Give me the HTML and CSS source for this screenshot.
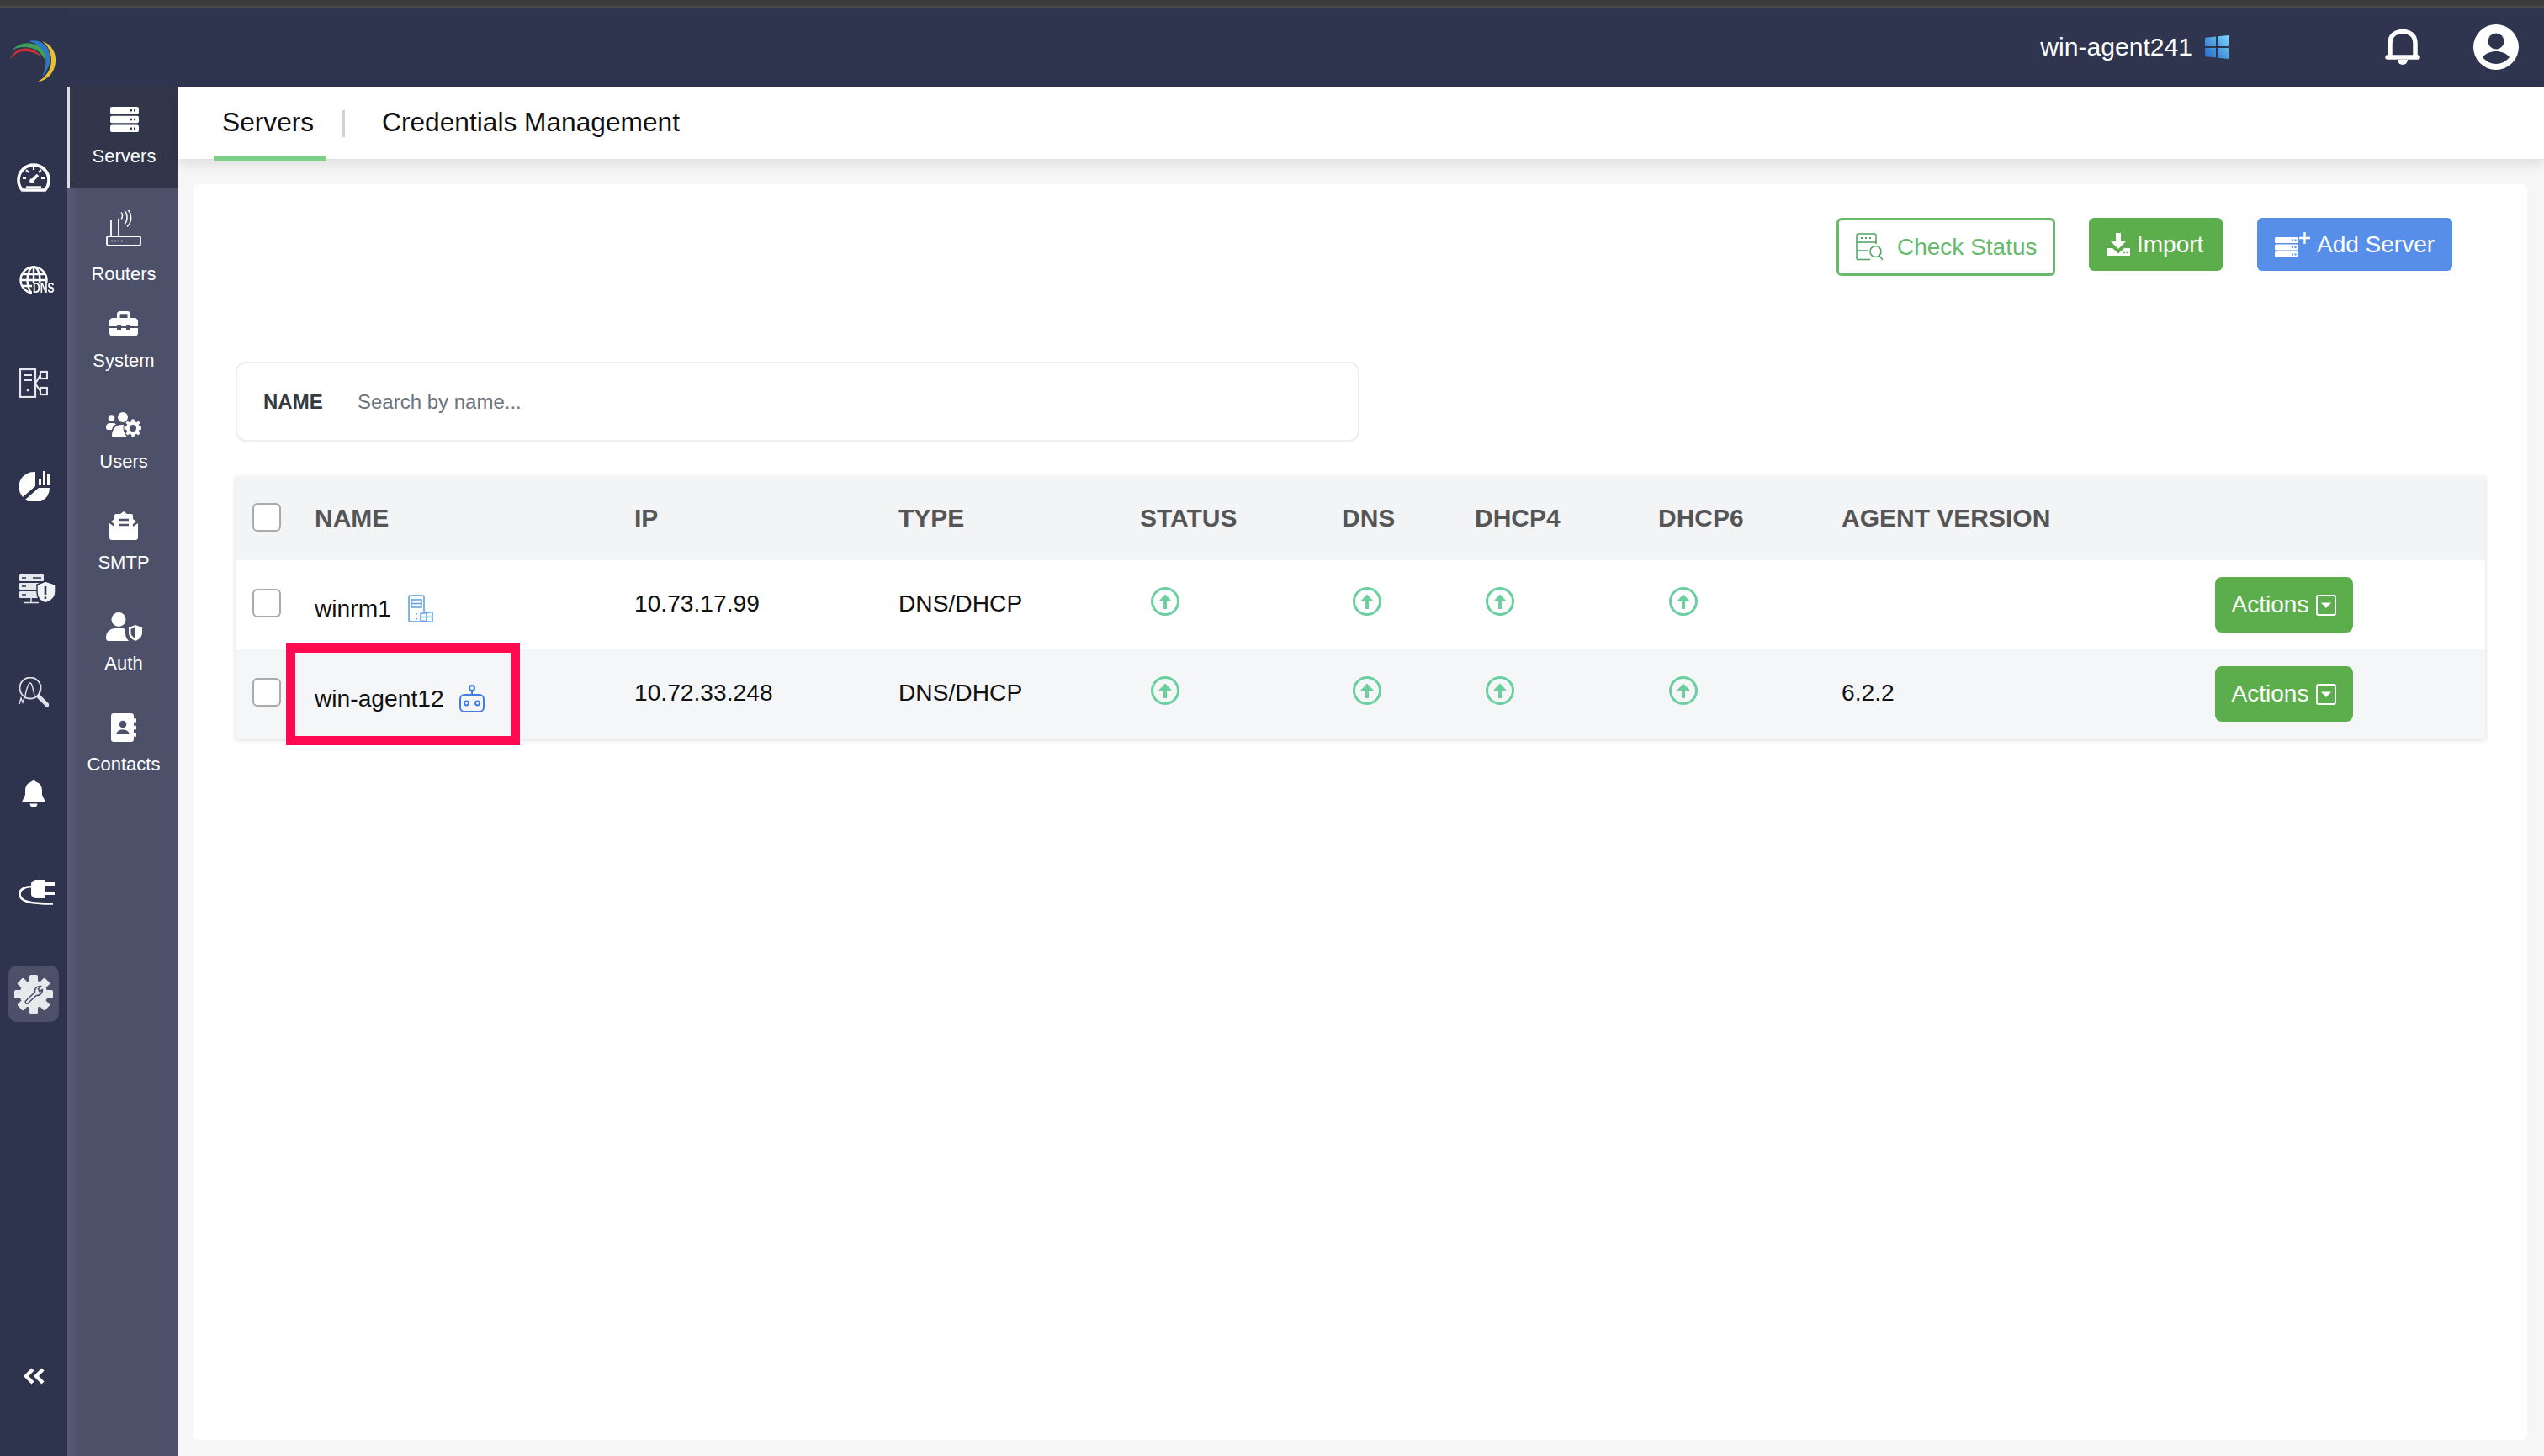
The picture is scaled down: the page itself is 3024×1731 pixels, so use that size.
FILE: index.html
```html
<!DOCTYPE html>
<html lang="en">
<head>
  <meta charset="UTF-8">
  <meta name="viewport" content="width=device-width, initial-scale=1.0">
  <title>Servers</title>
  <link rel="stylesheet" href="styles.css">
</head>
<body>
  <div class="window-strip"></div>
  <div class="app">

    <!-- Left icon rail -->
    <aside class="rail">
      <div class="rail-logo">
        <svg width="56" height="52" viewBox="0 0 56 52">
          <path d="M38 2 C50 6 55 16 54 27 C53 39 45 48 32 51 C42 45 49 36 49 25 C49 15 45 7 38 2Z" fill="#e8c22e"/>
          <path d="M22 2 C33 -1 45 5 47 17 C49 28 44 38 38 44 C42 35 44 27 41 18 C37 9 30 4 22 2Z" fill="#2f78c4"/>
          <path d="M2 13 C10 4 22 2 32 7 C40 11 43 18 42 26 C39 18 33 12 25 10 C16 8 8 9 2 13Z" fill="#3f9e57"/>
          <path d="M0 24 C3 13 14 9 24 11 C31 13 35 17 37 21 C31 16 24 14 17 14 C10 14 4 18 0 24Z" fill="#c9303a"/>
        </svg>
      </div>

      <div class="rail-item">
        <svg width="40" height="35" viewBox="0 0 40 35" fill="none" stroke="#fff">
          <path d="M6.5 33 A18 18 0 1 1 33.500 33 Z" stroke-width="3.600" stroke-linejoin="round"/>
          <path d="M20 5v4M7 19h4M29 19h4M11 9l3 3M29 9l-3 3" stroke-width="2.200"/>
          <path d="M18 22l7-7" stroke-width="3.500"/>
          <circle cx="18" cy="22" r="2.800" fill="#fff" stroke="none"/>
          <path d="M11 29.500h18" stroke-width="2.400"/>
        </svg>
      </div>
      <div class="rail-item">
        <div class="dns-icon">
          <svg width="40" height="34" viewBox="0 0 40 34" fill="none" stroke="#fff" stroke-width="2.400">
            <circle cx="17" cy="17" r="15.500"/>
            <ellipse cx="17" cy="17" rx="7.500" ry="15.500"/>
            <path d="M17 2v30M3 10h28M1.500 17h31M3 24h28"/>
            <rect x="15" y="20" width="25" height="14" fill="#2e334e" stroke="none"/>
          </svg>
          <span class="dns-text">DNS</span>
        </div>
      </div>
      <div class="rail-item">
        <svg width="34" height="35" viewBox="0 0 34 35" fill="none" stroke="#e6e7ec" stroke-width="2.200">
          <rect x="1" y="1" width="18" height="33"/>
          <path d="M5 8h10M5 14h10"/>
          <circle cx="10" cy="26" r="1.400" fill="#e6e7ec" stroke="none"/>
          <rect x="25" y="4" width="8" height="8"/>
          <rect x="25" y="23" width="8" height="8"/>
          <path d="M19 18l6-10M19 18l6 9"/>
        </svg>
      </div>
      <div class="rail-item">
        <svg width="37" height="37" viewBox="0 0 37 37" fill="#fff">
          <path d="M20 2 A18 18 0 0 0 5 32 L20 19 Z"/>
          <path d="M37 21 A18 18 0 0 1 8 35 L24 21 Z"/>
          <rect x="24" y="10" width="3" height="8"/>
          <rect x="29" y="1" width="3" height="17"/>
          <rect x="34" y="5" width="3" height="13"/>
        </svg>
      </div>
      <div class="rail-item rail-wide">
        <svg width="43" height="35" viewBox="0 0 43 35">
          <rect x="0" y="0" width="29" height="8" rx="1" fill="#e6e7ec"/>
          <rect x="0" y="10" width="29" height="8" rx="1" fill="#e6e7ec"/>
          <rect x="0" y="20" width="29" height="8" rx="1" fill="#e6e7ec"/>
          <path d="M3 4h5M3 14h5M3 24h5M16 4h10" stroke="#2e334e" stroke-width="1.600"/>
          <path d="M14 28v5M5 33.500h18" stroke="#e6e7ec" stroke-width="1.500"/>
          <path d="M31 8 L43 12 V21 C43 28 37 32 31 34 C25 32 21 28 21 21 V12 Z" fill="#f2f3f5" stroke="#2e334e" stroke-width="1.500"/>
          <path d="M31 14v10M31 26.500v2.500" stroke="#2e334e" stroke-width="2.600"/>
        </svg>
      </div>
      <div class="rail-item">
        <svg width="36" height="36" viewBox="0 0 36 36" fill="none" stroke="#dfe1e8">
          <circle cx="14" cy="13" r="12.500" stroke-width="1.800"/>
          <path d="M1 32l2-7 2 5 3-8M8 22c2-10 4-15 6-15s3 6 5 15M27 9l-3 12" stroke-width="1.400"/>
          <path d="M24 23l10 10" stroke-width="5" stroke-linecap="round"/>
        </svg>
      </div>
      <div class="rail-item rail-bell">
        <svg width="28" height="33" viewBox="0 0 28 33" fill="#fff">
          <path d="M14 0c-1.600 0-2.600 1-2.700 2.600C6.600 4 4 8 4 13v5L0 26.500h28L24 18v-5c0-5-2.600-9-7.300-10.400C16.600 1 15.600 0 14 0z"/>
          <path d="M9.500 28.500h9A4.500 4.500 0 0 1 14 33a4.500 4.500 0 0 1-4.500-4.500z"/>
        </svg>
      </div>
      <div class="rail-item rail-plug rail-wide">
        <svg width="44" height="31" viewBox="0 0 44 31">
          <path d="M17 8C8 8 1.500 11 1.500 17c0 8 9 11.500 39.500 11.500" fill="none" stroke="#fff" stroke-width="2.600"/>
          <path d="M22 0h9v22h-9c-4 0-7-2-7-5V5c0-3 3-5 7-5z" fill="#fff"/>
          <rect x="32" y="3" width="11" height="4" fill="#fff"/>
          <rect x="32" y="14" width="11" height="4" fill="#fff"/>
        </svg>
      </div>
      <div class="rail-settings">
        <svg width="46" height="46" viewBox="0 0 46 46" fill="#e8e9ec">
          <circle cx="23" cy="23" r="16.500"/>
          <rect x="18" y="0" width="10" height="46" rx="1.500"/>
          <rect x="18" y="0" width="10" height="46" rx="1.500" transform="rotate(45 23 23)"/>
          <rect x="18" y="0" width="10" height="46" rx="1.500" transform="rotate(90 23 23)"/>
          <rect x="18" y="0" width="10" height="46" rx="1.500" transform="rotate(135 23 23)"/>
          <path d="M13.500 31 L24.500 20.500 C24 16 27 13 32 13.500 L28.500 17 L30 20 L33.500 17.500 C33.500 22 30 25 26 24.500 L16 34 C14 35 12.500 33 13.500 31Z" fill="none" stroke="#4c5069" stroke-width="1.600" stroke-linejoin="round"/>
        </svg>
      </div>
      <div class="rail-collapse">
        <svg width="25" height="20" viewBox="0 0 25 20" fill="none" stroke="#fff" stroke-width="4.500" stroke-linejoin="round">
          <path d="M11 2L3 10l8 8M23 2l-8 8 8 8"/>
        </svg>
      </div>
    </aside>

    <div class="main">
      <!-- Top bar -->
      <header class="topbar">
        <span class="agent-name">win-agent241</span>
        <svg class="win-logo" width="28" height="28" viewBox="0 0 28 28">
          <defs>
            <linearGradient id="winBlue" x1="0" y1="1" x2="1" y2="0">
              <stop offset="0" stop-color="#2364c4"/>
              <stop offset="1" stop-color="#78d6fb"/>
            </linearGradient>
          </defs>
          <path d="M0 3l13-1.500V13H0zM15 1.300L28 0v13H15zM0 15h13v11.500L0 25zM15 15h13v13l-13-1.300z" fill="url(#winBlue)"/>
        </svg>
        <svg class="top-bell" width="42" height="42" viewBox="0 0 42 42" fill="none" stroke="#fff">
          <path d="M6 31V17C6 7 12 2.500 21 2.500S36 7 36 17v14" stroke-width="5.500"/>
          <path d="M3 33h36" stroke-width="5.500" stroke-linecap="round"/>
          <path d="M15 36h12a6 6 0 0 1-12 0z" fill="#fff" stroke="none"/>
        </svg>
        <svg class="top-user" width="54" height="54" viewBox="0 0 54 54">
          <circle cx="27" cy="27" r="27" fill="#fff"/>
          <circle cx="27" cy="20" r="9.500" fill="#2e334e"/>
          <path d="M11 39c4-5 10-7 16-7s12 2 16 7c-4 5-10 8-16 8s-12-3-16-8z" fill="#2e334e"/>
        </svg>
      </header>

      <div class="body">
        <!-- Second level menu -->
        <nav class="subnav">
          <a class="sub-item active">
            <span class="sub-icon">
              <svg width="34" height="30" viewBox="0 0 34 30">
                <rect y="0" width="34" height="8.500" rx="2" fill="#fff"/>
                <rect y="10.800" width="34" height="8.500" rx="2" fill="#fff"/>
                <rect y="21.500" width="34" height="8.500" rx="2" fill="#fff"/>
                <path d="M24 4.200h2M28 4.200h2M24 15h2M28 15h2M24 25.800h2M28 25.800h2" stroke="#32364a" stroke-width="2.400"/>
              </svg>
            </span>
            <span class="sub-label">Servers</span>
          </a>
          <a class="sub-item sub-item-tall">
            <span class="sub-icon">
              <svg width="42" height="43" viewBox="0 0 42 43" fill="none" stroke="#fff">
                <rect x="1" y="31" width="40" height="11" rx="2" stroke-width="1.800"/>
                <path d="M6 12v19M15 10v21" stroke-width="1.800"/>
                <path d="M18 3c2 2 2 6 0 8M22 1c4 4 4 12 0 16M26 0c5 5 5 15-1 20" stroke-width="1.500" transform="translate(0 -.5)"/>
                <path d="M6 36.500h14" stroke-width="1.600" stroke-dasharray="2 2"/>
              </svg>
            </span>
            <span class="sub-label">Routers</span>
          </a>
          <a class="sub-item">
            <span class="sub-icon">
              <svg width="34" height="30" viewBox="0 0 34 30" fill="#fff">
                <path d="M9 9V3.500C9 1.500 10.500 0 12.500 0h9C23.500 0 25 1.500 25 3.500V9h-3.500V4a.8.8 0 0 0-.8-.8h-7.400a.8.8 0 0 0-.8.800v5z"/>
                <path d="M4 8h26c2.200 0 4 1.800 4 4v6H25v-2h-5v2h-6v-2H9v2H0v-6c0-2.200 1.800-4 4-4z"/>
                <path d="M0 20h9v2h5v-2h6v2h5v-2h9v6c0 2.200-1.800 4-4 4H4c-2.200 0-4-1.800-4-4z"/>
              </svg>
            </span>
            <span class="sub-label">System</span>
          </a>
          <a class="sub-item">
            <span class="sub-icon">
              <svg width="42" height="30" viewBox="0 0 42 30" fill="#fff">
                <circle cx="6.500" cy="7" r="3.800"/>
                <circle cx="20" cy="6" r="6"/>
                <path d="M0 18c0-3 2-5 5-5h3c2 0 3 .5 4 1.500-3 1.500-4.500 3.500-5 6.500H2c-1 0-2-1-2-3z"/>
                <path d="M9 30c-1 0-2-1-2-2 0-8 5-13 12-13 3 0 5 .6 6.500 2-3 3-3.500 6-2.500 9l2 4z"/>
                <circle cx="32" cy="19" r="11.500" fill="#4c5069"/>
                <circle cx="32" cy="19" r="6" fill="none" stroke="#fff" stroke-width="4"/>
                <path d="M32 8.500v21M21.500 19h21M24.500 11.500l15 15M39.500 11.500l-15 15" stroke="#fff" stroke-width="3.400" stroke-dasharray="3.400 14.200"/>
              </svg>
            </span>
            <span class="sub-label">Users</span>
          </a>
          <a class="sub-item">
            <span class="sub-icon">
              <svg width="34" height="34" viewBox="0 0 34 34" fill="#fff">
                <path d="M17 0l4 3h5a2 2 0 0 1 2 2v4l4 3-4 3v5l-11 7-11-7v-5l-4-3 4-3V5a2 2 0 0 1 2-2h5z"/>
                <path d="M0 14l16 11c.6.400 1.400.400 2 0L34 14v17c0 1.700-1.300 3-3 3H3c-1.700 0-3-1.300-3-3z"/>
                <path d="M11 10h12M11 16h12" stroke="#4c5069" stroke-width="2.600"/>
              </svg>
            </span>
            <span class="sub-label">SMTP</span>
          </a>
          <a class="sub-item">
            <span class="sub-icon">
              <svg width="43" height="34" viewBox="0 0 43 34" fill="#fff">
                <circle cx="15" cy="8.500" r="8.500"/>
                <path d="M0 30c0-7 5-11 11-11h7c2 0 3.500.3 5 1v5c0 3.500 1.500 6.500 4 9H3c-2 0-3-1.500-3-4z"/>
                <path d="M35 15l8 3v6c0 5-3.500 8-8 10-4.500-2-8-5-8-10v-6z"/>
                <path d="M35 18v13c-3-1.500-5.500-3.500-5.500-7v-4.200z" fill="#4c5069"/>
              </svg>
            </span>
            <span class="sub-label">Auth</span>
          </a>
          <a class="sub-item">
            <span class="sub-icon">
              <svg width="30" height="34" viewBox="0 0 30 34" fill="#fff">
                <path d="M3 0h21c1.700 0 3 1.300 3 3v28c0 1.700-1.300 3-3 3H3c-1.700 0-3-1.300-3-3V3c0-1.700 1.300-3 3-3z"/>
                <rect x="27" y="6" width="3" height="5" rx="1.200"/>
                <rect x="27" y="14.500" width="3" height="5" rx="1.200"/>
                <rect x="27" y="23" width="3" height="5" rx="1.200"/>
                <circle cx="14" cy="13" r="4.300" fill="#4c5069"/>
                <path d="M6.500 25c0-3.500 3-5.500 7.500-5.500s7.500 2 7.500 5.500z" fill="#4c5069"/>
              </svg>
            </span>
            <span class="sub-label">Contacts</span>
          </a>
        </nav>

        <div class="content">
          <div class="tabs">
            <a class="tab active">Servers</a>
            <span class="tab-sep"></span>
            <a class="tab">Credentials Management</a>
          </div>

          <div class="page">
            <section class="card">
              <div class="toolbar">
                <button class="btn btn-outline">
                  <svg width="32" height="33" viewBox="0 0 32 33" fill="none" stroke="#4ea25e" stroke-width="1.500">
                    <path d="M1 31V3c0-1.200.8-2 2-2h19c1.200 0 2 .8 2 2v10M1 11h23M1 21h14M1 31.500h16"/>
                    <path d="M6 6h2M11 6h2M16 6h2" stroke-width="2"/>
                    <circle cx="23.500" cy="22" r="6.500"/>
                    <path d="M28 27l4 5"/>
                  </svg>
                  <span>Check Status</span>
                </button>
                <button class="btn btn-green">
                  <svg width="28" height="27" viewBox="0 0 28 27" fill="#fff">
                    <path d="M11 0h6v10h6l-9 9-9-9h6z"/>
                    <path d="M1 18h6l7 6.500L21 18h6c.6 0 1 .4 1 1v7c0 .6-.4 1-1 1H1c-.6 0-1-.4-1-1v-7c0-.6.4-1 1-1z"/>
                    <path d="M20 23.500h2M23.500 23.500h2" stroke="#5cae4c" stroke-width="1.600"/>
                  </svg>
                  <span>Import</span>
                </button>
                <button class="btn btn-blue">
                  <svg width="42" height="30" viewBox="0 0 42 30" fill="#fff">
                    <rect y="6" width="28" height="7" rx="1.500"/>
                    <rect y="14.500" width="28" height="7" rx="1.500"/>
                    <rect y="23" width="28" height="7" rx="1.500"/>
                    <path d="M20 9.500h2M23.500 9.500h2M20 18h2M23.500 18h2M20 26.500h2M23.500 26.500h2" stroke="#568eea" stroke-width="1.800"/>
                    <path d="M35.500 0v14M29 7h13" stroke="#fff" stroke-width="2.400"/>
                  </svg>
                  <span>Add Server</span>
                </button>
              </div>

              <div class="search-box">
                <label class="search-label" for="nameSearch">NAME</label>
                <input class="search-input" id="nameSearch" type="text" placeholder="Search by name...">
              </div>

              <div class="table-wrap">
                <table class="servers">
                  <colgroup>
                    <col class="c-check"><col class="c-name"><col class="c-ip"><col class="c-type"><col class="c-status"><col class="c-dns"><col class="c-dhcp"><col class="c-dhcp"><col class="c-agent"><col class="c-actions">
                  </colgroup>
                  <thead>
                    <tr>
                      <th><span class="check"></span></th>
                      <th>NAME</th>
                      <th>IP</th>
                      <th>TYPE</th>
                      <th>STATUS</th>
                      <th>DNS</th>
                      <th>DHCP4</th>
                      <th>DHCP6</th>
                      <th>AGENT VERSION</th>
                      <th></th>
                    </tr>
                  </thead>
                  <tbody>
                    <tr>
                      <td><span class="check"></span></td>
                      <td>
                        <div class="name-cell">
                          <span>winrm1</span>
                          <svg width="30" height="33" viewBox="0 0 30 33" fill="none" stroke="#5b9de8" stroke-width="1.500">
                            <path d="M16 32H3c-1.200 0-2-.8-2-2V3c0-1.200.8-2 2-2h14c1.200 0 2 .8 2 2v17"/>
                            <rect x="4" y="6" width="12" height="9"/>
                            <path d="M4 10.500h12"/>
                            <path d="M10 22v1.500M10 28v1.500" stroke-width="2"/>
                            <path d="M15 22.500l14-2v12l-14-1.500zM22 21.500v10.500M15 26.500h14"/>
                          </svg>
                        </div>
                      </td>
                      <td class="val">10.73.17.99</td>
                      <td class="val">DNS/DHCP</td>
                      <td class="state"><svg class="up"><use href="#statusUp"/></svg></td>
                      <td class="state"><svg class="up"><use href="#statusUp"/></svg></td>
                      <td class="state"><svg class="up"><use href="#statusUp"/></svg></td>
                      <td class="state"><svg class="up"><use href="#statusUp"/></svg></td>
                      <td class="val"></td>
                      <td>
                        <button class="btn-actions">Actions
                          <svg width="24" height="25" viewBox="0 0 24 25"><rect x="1" y="1" width="22" height="23" rx="2" fill="none" stroke="#fff" stroke-width="2"/><path d="M6 9.500h12l-6 6.500z" fill="#fff"/></svg>
                        </button>
                      </td>
                    </tr>
                    <tr class="alt">
                      <td><span class="check"></span></td>
                      <td>
                        <div class="name-cell">
                          <span>win-agent12</span>
                          <svg width="30" height="33" viewBox="0 0 30 33" fill="none" stroke="#3f7fe0" stroke-width="2">
                            <circle cx="15" cy="4" r="3"/>
                            <path d="M15 7v5"/>
                            <rect x="1" y="12" width="28" height="20" rx="5"/>
                            <circle cx="8.500" cy="22" r="2.400"/>
                            <circle cx="21.500" cy="22" r="2.400"/>
                          </svg>
                        </div>
                      </td>
                      <td class="val">10.72.33.248</td>
                      <td class="val">DNS/DHCP</td>
                      <td class="state"><svg class="up"><use href="#statusUp"/></svg></td>
                      <td class="state"><svg class="up"><use href="#statusUp"/></svg></td>
                      <td class="state"><svg class="up"><use href="#statusUp"/></svg></td>
                      <td class="state"><svg class="up"><use href="#statusUp"/></svg></td>
                      <td class="val">6.2.2</td>
                      <td>
                        <button class="btn-actions">Actions
                          <svg width="24" height="25" viewBox="0 0 24 25"><rect x="1" y="1" width="22" height="23" rx="2" fill="none" stroke="#fff" stroke-width="2"/><path d="M6 9.500h12l-6 6.500z" fill="#fff"/></svg>
                        </button>
                      </td>
                    </tr>
                  </tbody>
                </table>
                <!-- Highlight drawn over the screenshot -->
                <div class="highlight"></div>
              </div>
            </section>
          </div>
        </div>
      </div>
    </div>
  </div>

  <svg class="sprites" width="0" height="0">
    <symbol id="statusUp" viewBox="0 0 34 34">
      <circle cx="17" cy="17" r="15.500" fill="none" stroke="#6bcf9f" stroke-width="3"/>
      <path d="M17 8.500L25 17h-6v9h-4v-9H9z" fill="#6bcf9f"/>
    </symbol>
  </svg>
</body>
</html>
```

FILE: styles.css
```css
/* Base */
* {
  box-sizing: border-box;
}

html, body {
  margin: 0;
  height: 1731px;
  overflow: hidden;
}

body {
  font-family: "Liberation Sans", Arial, sans-serif;
  background-color: #f6f6f6;
  color: #111;
}

svg {
  display: block;
  flex: none;
}

.sprites {
  position: absolute;
}

.window-strip {
  height: 9px;
  background-color: #3b3b3b;
  border-bottom: 2px solid #4a4a48;
}

.app {
  display: flex;
  height: 1722px;
}

/* Left rail */
.rail {
  width: 80px;
  flex: none;
  display: flex;
  flex-direction: column;
  align-items: center;
  background-color: #2e334e;
}

.rail-logo {
  width: 100%;
  height: 139.75px;
  padding: 38px 0 0 12px;
}

.rail-logo svg {
  filter: blur(0.6px);
}

.rail-item {
  height: 122.5px;
  display: flex;
  align-items: center;
  justify-content: center;
}

.rail-wide {
  padding-left: 8px;
}

.rail-bell {
  padding-bottom: 4px;
}

.rail-plug {
  height: 110px;
}

.dns-icon {
  position: relative;
  margin-left: 6px;
}

.dns-text {
  position: absolute;
  left: 16px;
  bottom: -2px;
  font-size: 16px;
  line-height: 18px;
  font-weight: bold;
  color: #fff;
  transform: scaleX(0.76);
  transform-origin: left center;
}

.rail-settings {
  width: 60px;
  height: 67px;
  margin-top: 32px;
  border-radius: 10px;
  background-color: #4c5069;
  display: flex;
  align-items: center;
  justify-content: center;
}

.rail-collapse {
  margin-top: auto;
  padding-bottom: 85px;
}

/* Top bar */
.main {
  flex: 1;
  min-width: 0;
  display: flex;
  flex-direction: column;
}

.topbar {
  height: 94px;
  flex: none;
  display: flex;
  align-items: center;
  justify-content: flex-end;
  padding-right: 30px;
  background-color: #2f344f;
  color: #fff;
}

.agent-name {
  font-size: 30.1px;
}

.win-logo {
  margin-left: 15px;
}

.top-bell {
  margin-left: 186px;
}

.top-user {
  margin-left: 63px;
}

.body {
  flex: 1;
  min-height: 0;
  display: flex;
}

/* Second level menu */
.subnav {
  width: 132px;
  flex: none;
  background: linear-gradient(90deg, #585c73, #4c5069 14px);
}

.sub-item {
  height: 120px;
  padding: 22px 0 0 2px;
  display: flex;
  flex-direction: column;
  align-items: center;
  color: #fff;
}

.sub-item.active {
  padding-left: 0;
  background: #32364a;
  border-left: 3px solid #dcdde2;
}

.sub-item-tall {
  height: 123px;
  padding-top: 27px;
}

.sub-icon {
  height: 34px;
  display: flex;
  align-items: center;
  justify-content: center;
}

.sub-item-tall .sub-icon {
  height: 43px;
  margin-bottom: 6px;
}

.sub-label {
  margin-top: 14px;
  font-size: 22px;
  line-height: 26px;
}

/* Tabs */
.content {
  flex: 1;
  min-width: 0;
  display: flex;
  flex-direction: column;
}

.tabs {
  height: 86px;
  flex: none;
  display: flex;
  align-items: flex-start;
  padding-left: 42px;
  background-color: #fff;
  box-shadow: 0 6px 14px rgba(0, 0, 0, 0.1);
  position: relative;
}

.tab {
  font-size: 31.7px;
  line-height: 84px;
  color: #111;
}

.tab.active {
  width: 134px;
  height: 88px;
  padding-left: 10px;
  border-bottom: 6px solid #7bd088;
}

.tab-sep {
  width: 3px;
  height: 32px;
  margin: 28px 44px 0 19px;
  background-color: #d2d2d2;
}

/* Page */
.page {
  flex: 1;
  min-height: 0;
  padding: 30px 20px 19px 18px;
}

.card {
  height: 100%;
  padding: 40px 50px 0;
  background-color: #fff;
  border-radius: 6px;
}

.toolbar {
  display: flex;
  align-items: flex-start;
  justify-content: flex-end;
  padding-right: 39px;
}

.btn {
  height: 63px;
  display: flex;
  align-items: center;
  gap: 8px;
  padding: 0 0 0 21px;
  border: none;
  border-radius: 6px;
  font-family: inherit;
  font-size: 28px;
  color: #fff;
  cursor: pointer;
}

.btn-outline {
  width: 260px;
  height: 69px;
  gap: 17px;
  padding-left: 20px;
  border: 3px solid #66bb6a;
  background-color: #fff;
  color: #66bb6a;
}

.btn-green {
  width: 159px;
  margin: 0 41px 0 40px;
  background-color: #5cae4c;
}

.btn-blue {
  width: 232px;
  background-color: #568eea;
}

/* Search */
.search-box {
  width: 1336px;
  height: 95px;
  margin-top: 102px;
  display: flex;
  align-items: center;
  padding-left: 31px;
  border: 2px solid #eeeeee;
  border-radius: 12px;
}

.search-label {
  width: 112px;
  flex: none;
  font-size: 24px;
  font-weight: bold;
  color: #343a40;
}

.search-input {
  flex: 1;
  border: none;
  outline: none;
  padding: 0;
  font-family: inherit;
  font-size: 24px;
  color: #343a40;
}

.search-input::placeholder {
  color: #6c757d;
  opacity: 1;
}

/* Table */
.table-wrap {
  position: relative;
  width: 2674px;
  margin-top: 41px;
}

.servers {
  width: 100%;
  table-layout: fixed;
  border-collapse: collapse;
  box-shadow: 0 2px 6px rgba(0, 0, 0, 0.14);
}

.c-check { width: 94px; }
.c-name { width: 380px; }
.c-ip { width: 314px; }
.c-type { width: 287px; }
.c-status { width: 240px; }
.c-dns { width: 158px; }
.c-dhcp { width: 218px; }
.c-agent { width: 444px; }
.c-actions { width: 321px; }

.servers th,
.servers td {
  padding: 0;
  text-align: left;
}

.servers th {
  height: 100px;
  background-color: #f3f4f6;
  font-size: 30px;
  font-weight: bold;
  color: #555;
}

.servers td {
  height: 106px;
  font-size: 28.2px;
  color: #111;
}

.servers td.val {
  padding-bottom: 3px;
}

.servers .alt td {
  background-color: #f5f6f8;
}

.check {
  display: block;
  width: 34px;
  height: 34px;
  margin: -3px 0 0 20px;
  background-color: #fff;
  border: 2px solid #aaa;
  border-radius: 6px;
}

.servers td .check {
  margin-top: -5px;
}

.name-cell {
  display: flex;
  align-items: center;
  gap: 20px;
  margin-top: 8px;
}

.alt .name-cell {
  gap: 18px;
  margin-top: 10px;
}

.servers td.state {
  padding-left: 13px;
}

.up {
  width: 34px;
  height: 34px;
  margin-top: -8px;
}

.btn-actions {
  width: 164px;
  height: 66px;
  display: flex;
  align-items: center;
  justify-content: center;
  gap: 9px;
  padding: 0;
  border: none;
  border-radius: 8px;
  background-color: #5cae4c;
  font-family: inherit;
  font-size: 28px;
  color: #fff;
  cursor: pointer;
}

.highlight {
  position: absolute;
  left: 60px;
  top: 199px;
  width: 278px;
  height: 121px;
  border: 11px solid #ff0a50;
}
```
